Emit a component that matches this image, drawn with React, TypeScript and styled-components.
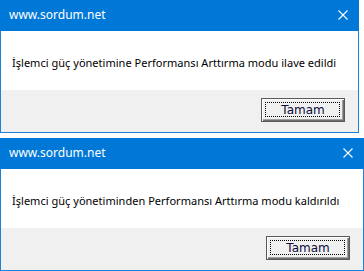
import React from "react";
import styled, { createGlobalStyle } from "styled-components";

const Global = createGlobalStyle`
  html, body { margin: 0; padding: 0; background: #ffffff; }
  body { font-family: "Noto Sans", "Open Sans", sans-serif; }
`;

const Stack = styled.div`
  display: flex;
  flex-direction: column;
  gap: 5px;
`;

const Dialog = styled.div<{ $width: number }>`
  width: ${(p) => p.$width}px;
  box-sizing: border-box;
  border: 1px solid #1a82d8;
  display: flex;
  flex-direction: column;
  background: #ffffff;
`;

const TitleBar = styled.div`
  height: 30px;
  margin: -1px -1px 0 -1px;
  padding-top: 1px;
  background: #0078d7;
  display: flex;
  align-items: center;
  justify-content: space-between;
  padding-left: 9px;
  padding-right: 11px;
  color: #ffffff;
  font-size: 12px;
`;

const TitleText = styled.span`
  line-height: 16px;
  margin-top: -2px;
`;

const CloseIcon = styled.svg`
  width: 10px;
  height: 10px;
  margin-top: -3px;
`;

const Body = styled.div`
  height: 59px;
  display: flex;
  align-items: center;
  padding-left: 11px;
  font-size: 11px;
  color: #000000;
  background: #ffffff;
`;

const Message = styled.span`
  margin-top: 3px;
  letter-spacing: 0.02px;
`;

const Footer = styled.div`
  height: 42px;
  background: #f0f0f0;
  display: flex;
  justify-content: flex-end;
  align-items: flex-start;
  padding-top: 8px;
  padding-right: 13px;
  box-sizing: border-box;
`;

const Button = styled.button`
  position: relative;
  width: 84px;
  height: 24px;
  box-sizing: border-box;
  border: 1px solid #5a5a5a;
  background: #f0f0f0;
  box-shadow: inset 1px 1px 0 #ffffff, inset -1px -1px 0 #6e6e6e, inset -2px -2px 0 #a0a0a0;
  font-family: "DejaVu Sans", "Noto Sans", sans-serif;
  font-size: 12px;
  color: #0a0a3c;
  padding: 0;
  line-height: 20px;
  &::after {
    content: "";
    position: absolute;
    left: 3px;
    top: 3px;
    right: 4px;
    bottom: 4px;
    border: 1px dotted #000000;
  }
`;

function Close() {
  return (
    <CloseIcon viewBox="0 0 10 10">
      <path d="M0.5 0.5 L9.5 9.5 M9.5 0.5 L0.5 9.5" stroke="#ffffff" strokeWidth="1.1" fill="none" />
    </CloseIcon>
  );
}

function MessageBox({ width, text }: { width: number; text: string }) {
  return (
    <Dialog $width={width}>
      <TitleBar>
        <TitleText>www.sordum.net</TitleText>
        <Close />
      </TitleBar>
      <Body>
        <Message>{text}</Message>
      </Body>
      <Footer>
        <Button>Tamam</Button>
      </Footer>
    </Dialog>
  );
}

export default function App() {
  return (
    <>
      <Global />
      <Stack>
        <MessageBox width={359} text="İşlemci güç yönetimine Performansı Arttırma modu ilave edildi" />
        <MessageBox width={364} text="İşlemci güç yönetiminden Performansı Arttırma modu kaldırıldı" />
      </Stack>
    </>
  );
}
